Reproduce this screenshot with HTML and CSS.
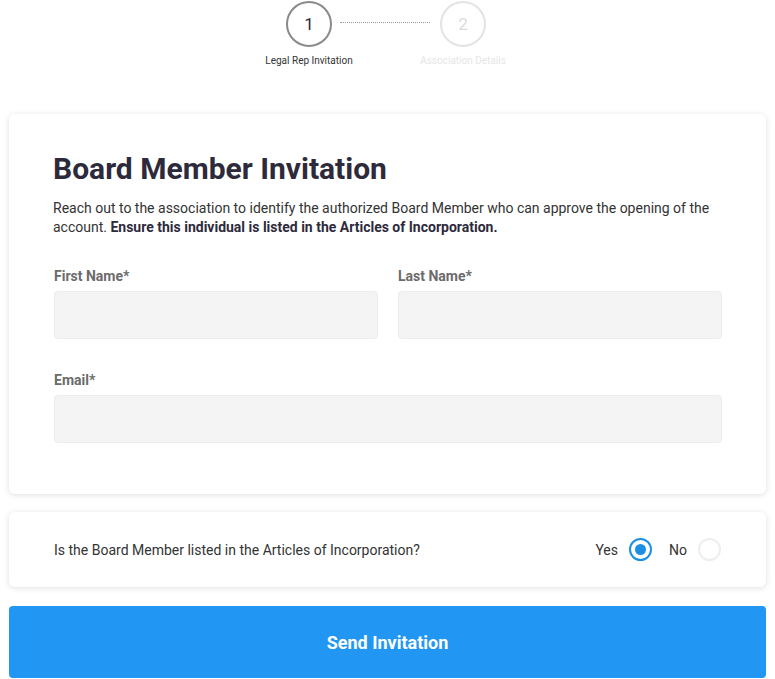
FILE: index.html
```html
<!DOCTYPE html>
<html lang="en">
<head>
<meta charset="utf-8">
<title>Board Member Invitation</title>
<link rel="stylesheet" href="styles.css">
</head>
<body>
<div class="page">
  <div class="stepper">
    <div class="step active">
      <div class="circle">1</div>
      <div class="step-label">Legal Rep Invitation</div>
    </div>
    <div class="connector"></div>
    <div class="step">
      <div class="circle">2</div>
      <div class="step-label">Association Details</div>
    </div>
  </div>

  <div class="card form-card">
    <h1 class="title">Board Member Invitation</h1>
    <p class="desc">Reach out to the association to identify the authorized Board Member who can approve the opening of the account. <strong>Ensure this individual is listed in the Articles of Incorporation.</strong></p>
    <div class="row">
      <div class="field">
        <label class="label">First Name*</label>
        <div class="input"></div>
      </div>
      <div class="field">
        <label class="label">Last Name*</label>
        <div class="input"></div>
      </div>
    </div>
    <div class="field email">
      <label class="label">Email*</label>
      <div class="input"></div>
    </div>
  </div>

  <div class="card question-card">
    <div class="question">Is the Board Member listed in the Articles of Incorporation?</div>
    <div class="options">
      <span class="opt-text">Yes</span>
      <span class="radio checked"></span>
      <span class="opt-text no">No</span>
      <span class="radio"></span>
    </div>
  </div>

  <button class="send">Send Invitation</button>
</div>
</body>
</html>
```

FILE: styles.css
```css
* { box-sizing: border-box; }
html, body { margin: 0; padding: 0; background: #ffffff; }
body { font-family: Roboto, "Noto Sans", Arial, sans-serif; color: #333333; }

.page { padding: 1px 9px 0 9px; }

.stepper {
  display: flex;
  justify-content: center;
  align-items: flex-start;
  height: 66px;
  padding-right: 3px;
}
.step { display: flex; flex-direction: column; align-items: center; width: 46px; }
.circle {
  width: 46px; height: 46px; border-radius: 50%;
  border: 2.5px solid #e3e3e3;
  color: #dcdcdc;
  font-size: 17px;
  display: flex; align-items: center; justify-content: center;
}
.step-label {
  white-space: nowrap;
  font-size: 10px;
  color: #e6e6e6;
  margin-top: 8px;
}
.step.active .circle { border-color: #8a8a8a; color: #2d2a3b; }
.step.active .step-label { color: #333333; }
.connector {
  width: 90px;
  margin: 21px 10px 0 8px;
  border-top: 1px dotted #9a9a9a;
}

.card {
  background: #fff;
  border-radius: 6px;
  box-shadow: 0 1px 6px rgba(0,0,0,0.13);
}
.form-card { margin-top: 47px; padding: 37px 44px 51px 44px; }
.title {
  margin: 0;
  font-size: 30px;
  line-height: 36px;
  font-weight: 700;
  color: #2d2a3b;
}
.desc {
  margin: 12px 0 0 0;
  font-size: 14px;
  line-height: 19px;
  color: #333333;
}
.desc strong { font-weight: 700; color: #2d2a3b; }

.row { display: grid; grid-template-columns: 1fr 1fr; gap: 20px; margin-top: 30px; margin-left: 1px; }
.field { display: flex; flex-direction: column; }
.label {
  font-size: 14px;
  line-height: 18px;
  font-weight: 700;
  color: #6b6b6b;
  margin-bottom: 6px;
}
.input {
  height: 48px;
  background: #f4f4f4;
  border: 1px solid #ececec;
  border-radius: 4px;
}
.email { margin-top: 32px; margin-left: 1px; }

.question-card {
  margin-top: 18px;
  height: 75px;
  padding: 0 45px 0 45px;
  display: flex; align-items: center; justify-content: space-between;
}
.question { font-size: 14px; color: #333333; }
.options { display: flex; align-items: center; }
.opt-text { font-size: 14px; color: #333333; }
.radio {
  width: 23px; height: 23px; border-radius: 50%;
  border: 2px solid #eeeeee;
  margin-left: 11px;
  display: flex; align-items: center; justify-content: center;
}
.radio.checked { border-color: #1a8fe3; }
.radio.checked::after {
  content: ""; width: 11px; height: 11px; border-radius: 50%; background: #1a8fe3;
}
.opt-text.no { margin-left: 17px; }

.send {
  display: block;
  width: 100%;
  margin-top: 19px;
  height: 72px;
  border: none;
  border-radius: 4px;
  background: #2196f3;
  color: #ffffff;
  font-family: Roboto, "Noto Sans", Arial, sans-serif;
  font-size: 18px;
  font-weight: 700;
}
```
